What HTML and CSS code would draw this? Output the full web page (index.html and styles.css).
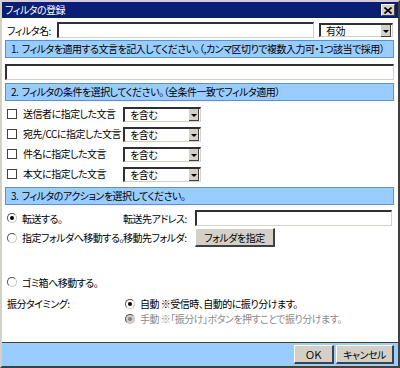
FILE: index.html
```html
<!DOCTYPE html>
<html lang="ja">
<head>
  <meta charset="UTF-8" />
  <title>フィルタの登録</title>
  <link rel="stylesheet" href="styles.css">
</head>
<body>
  <div class="window">
    <div class="titlebar">
      <span class="title">フィルタの登録</span>
      <span class="close-btn">
        <svg width="8" height="7" viewBox="0 0 8 7"><path d="M0.5 0.5 L7.5 6.5 M7.5 0.5 L0.5 6.5" stroke="#000" stroke-width="1.6"/></svg>
      </span>
    </div>

    <div class="content">
      <div class="name-row">
        <label class="name-label">フィルタ名:</label>
        <div class="field name-field"></div>
        <div class="select status-select">
          <span class="select-text">有効</span>
          <span class="select-arrow"></span>
        </div>
      </div>

      <div class="section s1">1.&nbsp; フィルタを適用する文言を記入してください。（,カンマ区切りで複数入力可・1つ該当で採用）</div>
      <div class="field wide-field"></div>

      <div class="section s2">2.&nbsp; フィルタの条件を選択してください。（全条件一致でフィルタ適用）</div>
      <div class="cond-list">
        <div class="cond-row">
          <label class="check-label"><span class="checkbox"></span>送信者に指定した文言</label>
          <div class="select cond-select"><span class="select-text">を含む</span><span class="select-arrow"></span></div>
        </div>
        <div class="cond-row">
          <label class="check-label"><span class="checkbox"></span>宛先/CCに指定した文言</label>
          <div class="select cond-select"><span class="select-text">を含む</span><span class="select-arrow"></span></div>
        </div>
        <div class="cond-row">
          <label class="check-label"><span class="checkbox"></span>件名に指定した文言</label>
          <div class="select cond-select"><span class="select-text">を含む</span><span class="select-arrow"></span></div>
        </div>
        <div class="cond-row">
          <label class="check-label"><span class="checkbox"></span>本文に指定した文言</label>
          <div class="select cond-select"><span class="select-text">を含む</span><span class="select-arrow"></span></div>
        </div>
      </div>

      <div class="section s3">3.&nbsp; フィルタのアクションを選択してください。</div>
      <div class="actions">
        <div class="action-row forward-row">
          <label class="radio-label"><span class="radio checked"></span>転送する。</label>
          <span class="sub-label">転送先アドレス:</span>
          <div class="field addr-field"></div>
        </div>
        <div class="action-row move-row">
          <label class="radio-label"><span class="radio"></span>指定フォルダへ移動する。</label>
          <span class="sub-label">移動先フォルダ:</span>
          <div><button class="btn folder-btn">フォルダを指定</button></div>
        </div>
        <div class="action-row trash-row">
          <label class="radio-label"><span class="radio"></span>ゴミ箱へ移動する。</label>
        </div>
        <div class="action-row timing-row first-timing">
          <span class="timing-label">振分タイミング:</span>
          <label class="radio-label timing-opt"><span class="radio checked"></span>自動 ※受信時、自動的に振り分けます。</label>
        </div>
        <div class="action-row timing-row">
          <span></span>
          <label class="radio-label timing-opt disabled"><span class="radio checked"></span>手動 ※「振分け」ボタンを押すことで振り分けます。</label>
        </div>
      </div>
    </div>

    <div class="footer">
      <button class="btn ok-btn">ＯＫ</button>
      <button class="btn cancel-btn">キャンセル</button>
    </div>
  </div>
</body>
</html>
```

FILE: styles.css
```css
body {
  margin: 0;
  padding: 0;
  background-color: #fff;
  font-family: "Noto Sans CJK JP", "Liberation Sans", sans-serif;
  font-size: 10px;
  font-feature-settings: "palt";
  letter-spacing: -0.5px;
  color: #000;
}

.window {
  width: 400px;
  height: 368px;
  box-sizing: border-box;
  border-style: solid;
  border-width: 2px;
  border-color: #d4d0c8 #404040 #404040 #d4d0c8;
  background-color: #fff;
  display: flex;
  flex-direction: column;
}

.titlebar {
  height: 16px;
  background-color: #0a1f74;
  color: #fff;
  display: flex;
  align-items: center;
  justify-content: space-between;
  padding: 0 3px;
}

.title {
  line-height: 16px;
}

.close-btn {
  width: 12px;
  height: 10px;
  background-color: #d4d0c8;
  border-style: solid;
  border-width: 1px;
  border-color: #fff #404040 #404040 #fff;
  display: flex;
  align-items: center;
  justify-content: center;
}

.content {
  flex: 1;
  padding: 4px 4px 0 3px;
  display: flex;
  flex-direction: column;
  white-space: nowrap;
}

/* fields */
.field {
  box-sizing: border-box;
  height: 16px;
  background-color: #fff;
  border-style: solid;
  border-width: 2px 1px 1px 2px;
  border-color: #303030 #d4d0c8 #d4d0c8 #303030;
}

.select {
  box-sizing: border-box;
  height: 15px;
  background-color: #fff;
  border-style: solid;
  border-width: 2px 1px 1px 2px;
  border-color: #303030 #d4d0c8 #d4d0c8 #303030;
  display: flex;
  align-items: center;
  justify-content: space-between;
}

.select-text {
  padding-left: 5px;
  line-height: 12px;
}

.select-arrow {
  width: 9px;
  height: 11px;
  margin-right: 1px;
  background-color: #d4d0c8;
  border-style: solid;
  border-width: 0 1px 1px 0;
  border-color: #404040;
  position: relative;
}

.select-arrow::after {
  content: "";
  position: absolute;
  left: 2px;
  top: 5px;
  border-left: 3px solid transparent;
  border-right: 3px solid transparent;
  border-top: 3px solid #000;
}

/* name row */
.name-row {
  display: flex;
  align-items: center;
  height: 16px;
}

.name-label {
  width: 50px;
  padding-left: 2px;
}

.name-field {
  width: 257px;
}

.status-select {
  width: 74px;
  margin-left: 5px;
  height: 14px;
}

/* section headers */
.section {
  box-sizing: border-box;
  height: 18px;
  background-color: #99ccff;
  border: 1px solid #5b8fd0;
  padding-left: 5px;
  line-height: 16px;
  overflow: hidden;
}

.s1 {
  margin-top: 2px;
}

.wide-field {
  margin-top: 6px;
}

.s2 {
  margin-top: 3px;
}

.s3 {
  margin-top: 5px;
}

/* conditions */
.cond-list {
  margin-top: 6px;
  display: flex;
  flex-direction: column;
  gap: 5px;
}

.cond-row {
  display: grid;
  grid-template-columns: 118px 78px;
  align-items: center;
  height: 15px;
}

.check-label {
  display: flex;
  align-items: center;
  margin-top: -2px;
}

.checkbox {
  box-sizing: border-box;
  flex-shrink: 0;
  width: 10px;
  height: 10px;
  margin: 0 6px 0 2px;
  border: 1px solid #404040;
  background-color: #fff;
}

/* actions */
.actions {
  margin-top: 5px;
  display: flex;
  flex-direction: column;
}

.action-row {
  display: grid;
  grid-template-columns: 118px 72px 1fr;
  align-items: center;
}

.forward-row {
  height: 16px;
}

.move-row {
  height: 19px;
  margin-top: 2px;
}

.trash-row {
  height: 16px;
  margin-top: 27px;
}

.timing-row {
  grid-template-columns: 118px 1fr;
  height: 15px;
}

.first-timing {
  margin-top: 6px;
}

.timing-label {
  padding-left: 2px;
}

.radio-label {
  display: flex;
  align-items: center;
}

.radio {
  box-sizing: border-box;
  flex-shrink: 0;
  width: 10px;
  height: 10px;
  margin: 0 5px 0 2px;
  border-radius: 50%;
  border-style: solid;
  border-width: 1px;
  border-color: #505050 #c8c4bc #c8c4bc #505050;
  background-color: #fff;
  position: relative;
}

.radio.checked::after {
  content: "";
  position: absolute;
  left: 2px;
  top: 2px;
  width: 4px;
  height: 4px;
  border-radius: 50%;
  background-color: #000;
}

.disabled {
  color: #8a8a8a;
}

.disabled .radio {
  background-color: #d4d0c8;
}

.disabled .radio.checked::after {
  background-color: #808080;
}

.addr-field {
  width: 197px;
}

/* buttons */
.btn {
  font-family: inherit;
  font-size: 10px;
  font-feature-settings: "palt";
  letter-spacing: -0.5px;
  background-color: #d4d0c8;
  color: #000;
  border-style: solid;
  border-width: 1px 2px 2px 1px;
  border-color: #fff #404040 #404040 #fff;
  padding: 0;
  margin: 0;
  cursor: pointer;
}

.folder-btn {
  width: 80px;
  height: 19px;
}

/* footer */
.footer {
  height: 23px;
  border-top: 1px solid #404040;
  background-color: #99ccff;
  display: flex;
  justify-content: flex-end;
  align-items: center;
  gap: 2px;
  padding-right: 4px;
}

.ok-btn {
  width: 40px;
  height: 19px;
}

.cancel-btn {
  width: 58px;
  height: 19px;
}
```
